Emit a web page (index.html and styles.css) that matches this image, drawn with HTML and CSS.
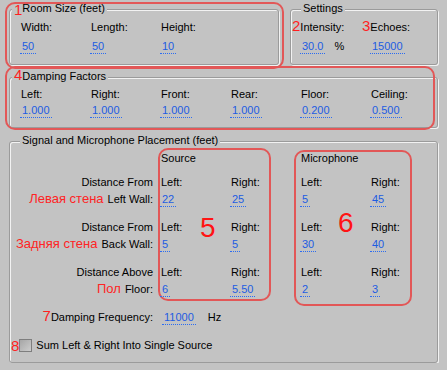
FILE: index.html
```html
<!DOCTYPE html>
<html lang="en">
  <head>
    <meta charset="UTF-8" />
    <title>Reverb Room Settings</title>
    <link rel="stylesheet" href="styles.css">
  </head>
  <body>
    <div class="window">
      <div class="top-row">
        <section class="group room">
          <div class="group-title marked"><span class="mark low">1</span>Room Size (feet)</div>
          <div class="fields">
            <div class="field"><span class="label">Width:</span><span class="value">50</span></div>
            <div class="field"><span class="label">Length:</span><span class="value">50</span></div>
            <div class="field"><span class="label">Height:</span><span class="value">10</span></div>
          </div>
        </section>

        <section class="group settings">
          <div class="group-title">Settings</div>
          <div class="fields">
            <div class="field">
              <span class="label"><span class="mark tuck">2</span>Intensity:</span>
              <span class="value-line"><span class="value">30.0</span><span class="unit">%</span></span>
            </div>
            <div class="field">
              <span class="label"><span class="mark tuck">3</span>Echoes:</span>
              <span class="value">15000</span>
            </div>
          </div>
        </section>
      </div>

      <section class="group damping">
        <div class="group-title marked"><span class="mark">4</span>Damping Factors</div>
        <div class="fields">
          <div class="field"><span class="label">Left:</span><span class="value">1.000</span></div>
          <div class="field"><span class="label">Right:</span><span class="value">1.000</span></div>
          <div class="field"><span class="label">Front:</span><span class="value">1.000</span></div>
          <div class="field"><span class="label">Rear:</span><span class="value">1.000</span></div>
          <div class="field"><span class="label">Floor:</span><span class="value">0.200</span></div>
          <div class="field"><span class="label">Ceiling:</span><span class="value">0.500</span></div>
        </div>
      </section>

      <section class="group placement">
        <div class="group-title">Signal and Microphone Placement (feet)</div>

        <div class="placement-row">
          <div class="side-labels">
            <div class="row-label">Distance From</div>
            <div class="row-value"><span class="note">Левая стена</span>Left Wall:</div>
            <div class="row-label">Distance From</div>
            <div class="row-value"><span class="note">Задняя стена</span>Back Wall:</div>
            <div class="row-label">Distance Above</div>
            <div class="row-value"><span class="note">Пол</span>Floor:</div>
          </div>

          <div class="pair source">
            <div class="pair-title">Source</div>
            <div class="pair-grid">
              <span class="label">Left:</span><span class="label">Right:</span>
              <span class="cell"><span class="value">22</span></span><span class="cell"><span class="value">25</span></span>
              <span class="label">Left:</span><span class="label">Right:</span>
              <span class="cell"><span class="value">5</span></span><span class="cell"><span class="value">5</span></span>
              <span class="label">Left:</span><span class="label">Right:</span>
              <span class="cell"><span class="value">6</span></span><span class="cell"><span class="value">5.50</span></span>
            </div>
            <span class="big-mark">5</span>
          </div>

          <div class="pair mic">
            <div class="pair-title">Microphone</div>
            <div class="pair-grid">
              <span class="label">Left:</span><span class="label">Right:</span>
              <span class="cell"><span class="value">5</span></span><span class="cell"><span class="value">45</span></span>
              <span class="label">Left:</span><span class="label">Right:</span>
              <span class="cell"><span class="value">30</span></span><span class="cell"><span class="value">40</span></span>
              <span class="label">Left:</span><span class="label">Right:</span>
              <span class="cell"><span class="value">2</span></span><span class="cell"><span class="value">3</span></span>
            </div>
            <span class="big-mark">6</span>
          </div>
        </div>

        <div class="freq-row">
          <span class="freq-label"><span class="mark">7</span>Damping Frequency:</span>
          <span class="value">11000</span>
          <span class="unit">Hz</span>
        </div>

        <label class="check-row">
          <span class="mark">8</span>
          <span class="checkbox"></span>
          Sum Left &amp; Right Into Single Source
        </label>
      </section>

      <!-- annotation outlines drawn over the dialog -->
      <div class="callout callout-room"></div>
      <div class="callout callout-damping"></div>
    </div>
  </body>
</html>
```

FILE: styles.css
```css
body {
  margin: 0;
  background-color: #c3c3c3;
  font-family: "Liberation Sans", Arial, sans-serif;
  font-size: 11px;
  line-height: 13px;
  color: #000;
}

.window {
  position: relative;
  width: 429px;
  padding: 9px 9px 0 9px;
  display: flex;
  flex-direction: column;
}

.top-row {
  display: flex;
  gap: 11px;
}

/* group boxes */
.group {
  box-sizing: border-box;
  border: 1px solid #9b9b9b;
  border-radius: 3px;
  box-shadow: 1px 1px 0 #f2f2f2, inset 1px 1px 0 #f2f2f2;
}

.group-title {
  width: fit-content;
  margin: -8px 0 0 10px;
  padding: 0 2px;
  background-color: #c3c3c3;
  white-space: nowrap;
}

.group-title.marked {
  margin-left: 2px;
}

.room {
  width: 270px;
  height: 56px;
}

.settings {
  width: 148px;
  height: 56px;
}

.damping {
  margin-top: 12px;
  height: 51px;
}

.placement {
  margin-top: 13px;
  height: 222px;
}

/* red annotation marks */
.mark {
  color: #ff1f1f;
  font-size: 15px;
  line-height: 10px;
}

.mark.tuck {
  margin-left: -9px;
}

.mark.low {
  vertical-align: -3px;
}

.note {
  color: #ff2424;
  font-size: 13px;
  line-height: 10px;
  margin-right: 4px;
}

.big-mark {
  position: absolute;
  color: #ff1414;
  font-size: 28px;
  line-height: 28px;
}

.callout {
  position: absolute;
  box-sizing: border-box;
  border: 2px solid #e25757;
  border-radius: 10px;
}

.callout-room {
  left: 5px;
  top: 2px;
  width: 279px;
  height: 67px;
}

.callout-damping {
  left: 5px;
  top: 66px;
  width: 430px;
  height: 64px;
}

/* label / value fields */
.fields {
  display: grid;
  grid-auto-flow: column;
  grid-auto-columns: 70px;
  justify-content: start;
  padding-left: 10px;
}

.settings .fields {
  padding-left: 9px;
}

.room .fields,
.settings .fields {
  margin-top: 6px;
}

.damping .fields {
  margin-top: 5px;
}

.field {
  display: flex;
  flex-direction: column;
  align-items: flex-start;
}

.label {
  margin-left: 1px;
  white-space: nowrap;
}

.value {
  display: inline-block;
  padding: 0 2px;
  color: #1d5ce2;
  border-bottom: 1px dotted #2b6cf2;
}

.room .value,
.settings .value-line {
  margin-top: 6px;
}

.settings .field > .value {
  margin-top: 6px;
}

.damping .value {
  margin-top: 3px;
}

.value-line {
  display: flex;
  align-items: baseline;
}

.value-line .unit {
  margin-left: 9px;
}

/* signal and microphone placement */
.placement-row {
  display: flex;
  align-items: flex-start;
  margin-top: 1px;
}

.side-labels {
  width: 143px;
  margin-right: 5px;
  padding-top: 28px;
  text-align: right;
  white-space: nowrap;
}

.row-label {
  height: 17px;
}

.row-value {
  height: 28px;
}

.pair {
  position: relative;
  box-sizing: border-box;
  border: 2px solid #e25757;
  border-radius: 10px;
}

.source {
  width: 113px;
  height: 153px;
  padding-top: 2px;
}

.mic {
  width: 118px;
  height: 156px;
  margin-left: 23px;
  margin-top: 2px;
  padding-left: 4px;
}

.pair-title {
  margin-left: 1px;
}

.pair-grid {
  display: grid;
  grid-template-columns: 70px auto;
  grid-template-rows: 17px 28px 17px 28px 17px 28px;
  margin-top: 11px;
}

.source .big-mark {
  left: 40px;
  top: 64px;
}

.mic .big-mark {
  left: 42px;
  top: 57px;
}

.freq-row {
  display: flex;
  align-items: baseline;
}

.freq-label {
  width: 143px;
  text-align: right;
  white-space: nowrap;
}

.freq-row .value {
  margin-left: 9px;
}

.freq-row .unit {
  margin-left: 12px;
}

.check-row {
  display: flex;
  align-items: center;
  margin-top: 14px;
  padding-left: 1px;
}

.checkbox {
  box-sizing: border-box;
  width: 13px;
  height: 13px;
  margin-right: 4px;
  border: 1px solid #7e7e7e;
  background: linear-gradient(to bottom right, #a6a6a6, #cdcdcd);
}
```
